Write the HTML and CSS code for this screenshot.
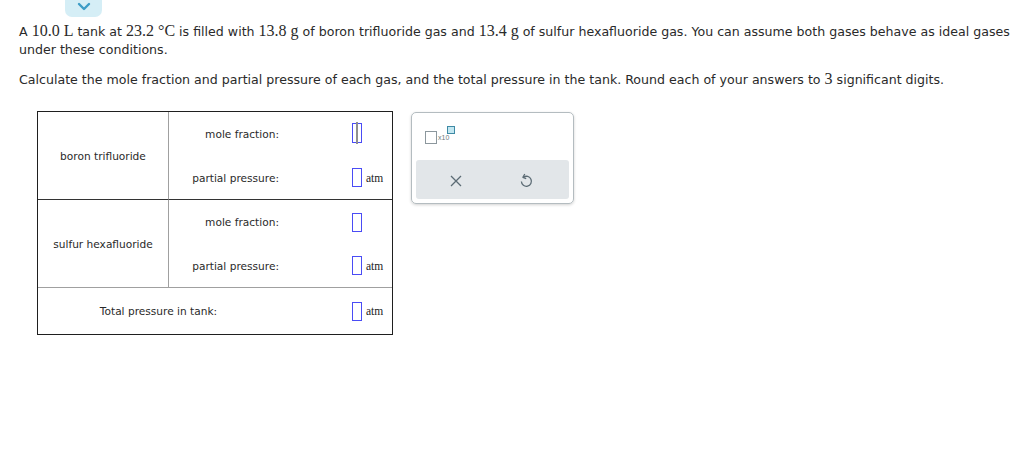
FILE: index.html
```html
<!DOCTYPE html>
<html>
<head>
<meta charset="utf-8">
<link rel="stylesheet" href="styles.css">
</head>
<body>
<div class="tab"><svg width="14" height="9" viewBox="0 0 14 9"><path d="M2 2 L7 7 L12 2" fill="none" stroke="#3c9cc6" stroke-width="2.4" stroke-linecap="round" stroke-linejoin="round"/></svg></div>
<div class="question">
  <p class="p1">A <span class="m">10.0 L</span> tank at <span class="m">23.2 °C</span> is filled with <span class="m">13.8 g</span> of boron trifluoride gas and <span class="m">13.4 g</span> of sulfur hexafluoride gas. You can assume both gases behave as ideal gases under these conditions.</p>
  <p class="p2">Calculate the mole fraction and partial pressure of each gas, and the total pressure in the tank. Round each of your answers to <span class="m">3</span> significant digits.</p>
</div>
<div class="work">
  <div class="grid">
    <div class="name r1">boron trifluoride</div>
    <div class="lab">mole fraction:</div>
    <div class="ans"><span class="box focus"><span class="caret"></span></span></div>
    <div class="lab sep">partial pressure:</div>
    <div class="ans sep"><span class="box"></span><span class="unit">atm</span></div>

    <div class="name r2">sulfur hexafluoride</div>
    <div class="lab">mole fraction:</div>
    <div class="ans"><span class="box"></span></div>
    <div class="lab sep2">partial pressure:</div>
    <div class="ans sep2"><span class="box"></span><span class="unit">atm</span></div>

    <div class="total">Total pressure in tank:</div>
    <div class="ans"><span class="box"></span><span class="unit">atm</span></div>
  </div>
  <div class="panel">
    <div class="tools">
      <span class="sq"></span><span class="x10">x10</span><span class="sup"></span>
    </div>
    <div class="bar">
      <svg class="ico" width="12" height="12" viewBox="0 0 12 12"><path d="M1 1 L11 11 M11 1 L1 11" stroke="#5b6b74" stroke-width="1.3" fill="none"/></svg>
      <svg class="ico" width="14" height="15" viewBox="0 0 14 15"><path d="M4.5 4.2 A5 5 0 1 1 2.4 8.5" stroke="#5b6b74" stroke-width="1.3" fill="none"/><path d="M5.8 1 L3.9 4.3 L7.2 5.6" stroke="#5b6b74" stroke-width="1.3" fill="none" stroke-linejoin="round"/></svg>
    </div>
  </div>
</div>
</body>
</html>
```
FILE: styles.css
```css
body {
  margin: 0;
  font-family: "DejaVu Sans", Verdana, sans-serif;
  color: #2a2a2a;
  background: #fff;
}
.tab {
  margin-left: 65px;
  width: 37px;
  height: 17px;
  background: #d5eef6;
  border-radius: 0 0 7px 7px;
  display: flex;
  align-items: center;
  justify-content: center;
}
.tab svg { margin-top: -4px; }
.question {
  padding: 0 6px 0 19px;
  font-size: 12.6px;
  line-height: 18px;
}
.question p { margin: 0; }
.p1 { margin-top: 6px !important; }
.p2 { margin-top: 12px !important; }
.m {
  font-family: "Liberation Serif", "Times New Roman", serif;
  font-size: 16px;
  line-height: 1;
}
.work {
  display: flex;
  align-items: flex-start;
  gap: 18px;
  margin: 22px 0 0 37px;
}
.grid {
  width: 356px;
  box-sizing: border-box;
  border: 1px solid #1f1f1f;
  display: grid;
  grid-template-columns: 131px 110px 1fr;
  grid-template-rows: 44px 44px 44px 44px 46px;
  font-size: 10.6px;
}
.grid > div {
  box-sizing: border-box;
  display: flex;
  align-items: center;
}
.name {
  grid-column: 1;
  justify-content: center;
  border-right: 1px solid #a0a0a0;
}
.r1 { grid-row: 1 / span 2; border-bottom: 1px solid #333; }
.r2 { grid-row: 3 / span 2; border-bottom: 1px solid #a0a0a0; }
.lab { justify-content: flex-end; }
.sep { border-bottom: 1px solid #333; }
.sep2 { border-bottom: 1px solid #a0a0a0; }
.ans { padding-left: 73px; }
.total {
  grid-column: 1 / span 2;
  justify-content: center;
}
.box {
  display: inline-block;
  width: 10px;
  height: 19px;
  box-sizing: border-box;
  border: 1px solid #4a4cf5;
  position: relative;
}
.box.focus { height: 20px; margin-top: -2px; }
.caret {
  position: absolute;
  left: 3px;
  top: -2px;
  width: 2px;
  height: 22px;
  background: #8f8f8f;
}
.unit {
  font-family: "Liberation Serif", "Times New Roman", serif;
  font-size: 11.5px;
  margin-left: 4px;
  color: #222;
}
.panel {
  margin-top: 1px;
  width: 163px;
  height: 92px;
  box-sizing: border-box;
  border: 1px solid #b4bcc0;
  border-radius: 5px;
  box-shadow: 0 1px 3px rgba(0,0,0,0.18);
  padding: 0 4px 4px 4px;
  display: flex;
  flex-direction: column;
}
.tools {
  height: 47px;
  position: relative;
}
.sq {
  position: absolute;
  left: 9px;
  top: 18px;
  width: 12px;
  height: 13px;
  box-sizing: border-box;
  border: 1.5px solid #8c979d;
}
.x10 {
  position: absolute;
  left: 22px;
  top: 21px;
  font-size: 7px;
  color: #6e7a80;
  font-family: "Liberation Sans", Arial, sans-serif;
}
.sup {
  position: absolute;
  left: 31px;
  top: 13px;
  width: 8px;
  height: 8px;
  box-sizing: border-box;
  background: #c3e7f1;
  border: 1.5px solid #3f8aa5;
}
.bar {
  flex: 1;
  background: #e2e6e9;
  border-radius: 3px;
  display: flex;
  align-items: center;
  justify-content: space-around;
  padding: 2px 8px 0 6px;
}
```
